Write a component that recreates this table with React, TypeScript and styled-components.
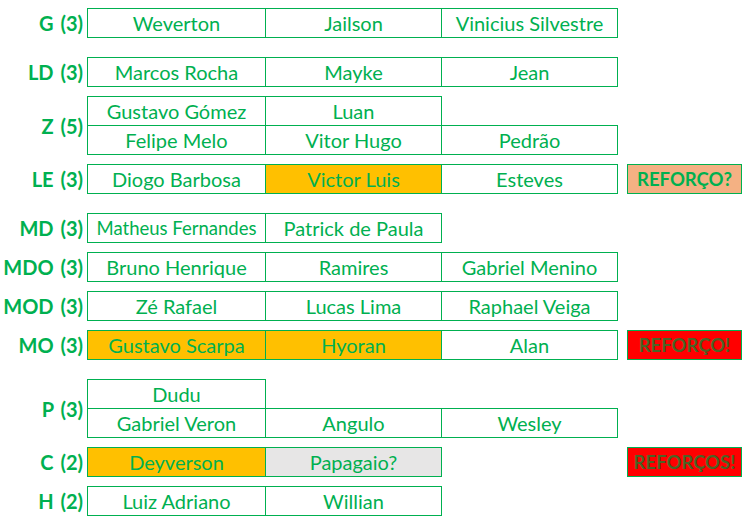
import styled, { createGlobalStyle } from "styled-components";

const GREEN = "#00b050";

const GlobalStyle = createGlobalStyle`
  html, body {
    margin: 0;
    padding: 0;
    background: #ffffff;
  }
  body {
    font-family: Lato, "Open Sans", sans-serif;
    color: ${GREEN};
  }
`;

const Sheet = styled.div`
  display: flex;
  flex-direction: column;
  padding-top: 8px;
  width: 756px;
`;

const Group = styled.div<{ $space: number }>`
  display: flex;
  align-items: center;
  margin-top: ${(p) => p.$space}px;
`;

const Label = styled.div`
  width: 87px;
  box-sizing: border-box;
  padding-right: 4px;
  text-align: right;
  font-weight: 700;
  font-size: 20px;
  word-spacing: 2px;
  white-space: nowrap;
`;

const Rows = styled.div`
  display: flex;
  flex-direction: column;
`;

const Row = styled.div`
  display: flex;
  & + & {
    margin-top: -1px;
  }
`;

const Cell = styled.div<{ $fill?: string; $first?: boolean; $small?: boolean }>`
  box-sizing: border-box;
  width: ${(p) => (p.$first ? 179 : 177)}px;
  height: 30px;
  margin-left: ${(p) => (p.$first ? 0 : -1)}px;
  border: 1px solid ${GREEN};
  background: ${(p) => p.$fill || "#ffffff"};
  display: flex;
  align-items: center;
  justify-content: center;
  font-size: ${(p) => (p.$small ? 18.5 : 20)}px;
  white-space: nowrap;
`;

const Note = styled.div<{ $fill: string; $ink: string; $skip: number }>`
  box-sizing: border-box;
  width: 115px;
  height: 30px;
  margin-left: ${(p) => 9 + p.$skip * 176}px;
  border: 1px solid ${GREEN};
  background: ${(p) => p.$fill};
  color: ${(p) => p.$ink};
  display: flex;
  align-items: center;
  justify-content: center;
  font-weight: 700;
  font-size: 18.5px;
  white-space: nowrap;
`;

type Player = { name: string; fill?: string; small?: boolean };
type Position = {
  label: string;
  space: number;
  rows: Player[][];
  note?: { text: string; fill: string; ink: string };
};

const ORANGE = "#ffc000";
const GREY = "#e7e6e6";
const RED_INK = "#4a6426";

const squad: Position[] = [
  { label: "G (3)", space: 0, rows: [[{ name: "Weverton" }, { name: "Jailson" }, { name: "Vinicius Silvestre" }]] },
  { label: "LD (3)", space: 19, rows: [[{ name: "Marcos Rocha" }, { name: "Mayke" }, { name: "Jean" }]] },
  {
    label: "Z (5)",
    space: 9,
    rows: [
      [{ name: "Gustavo Gómez" }, { name: "Luan" }],
      [{ name: "Felipe Melo" }, { name: "Vitor Hugo" }, { name: "Pedrão" }],
    ],
  },
  {
    label: "LE (3)",
    space: 9,
    rows: [[{ name: "Diogo Barbosa" }, { name: "Victor Luis", fill: ORANGE }, { name: "Esteves" }]],
    note: { text: "REFORÇO?", fill: "#f4b183", ink: GREEN },
  },
  { label: "MD (3)", space: 19, rows: [[{ name: "Matheus Fernandes", small: true }, { name: "Patrick de Paula" }]] },
  { label: "MDO (3)", space: 9, rows: [[{ name: "Bruno Henrique" }, { name: "Ramires" }, { name: "Gabriel Menino" }]] },
  { label: "MOD (3)", space: 9, rows: [[{ name: "Zé Rafael" }, { name: "Lucas Lima" }, { name: "Raphael Veiga" }]] },
  {
    label: "MO (3)",
    space: 9,
    rows: [[{ name: "Gustavo Scarpa", fill: ORANGE }, { name: "Hyoran", fill: ORANGE }, { name: "Alan" }]],
    note: { text: "REFORÇO!", fill: "#ff0000", ink: RED_INK },
  },
  {
    label: "P (3)",
    space: 19,
    rows: [
      [{ name: "Dudu" }],
      [{ name: "Gabriel Veron" }, { name: "Angulo" }, { name: "Wesley" }],
    ],
  },
  {
    label: "C (2)",
    space: 9,
    rows: [[{ name: "Deyverson", fill: ORANGE }, { name: "Papagaio?", fill: GREY }]],
    note: { text: "REFORÇOS!", fill: "#ff0000", ink: RED_INK },
  },
  { label: "H (2)", space: 9, rows: [[{ name: "Luiz Adriano" }, { name: "Willian" }]] },
];

export default function App() {
  return (
    <>
      <GlobalStyle />
      <Sheet>
        {squad.map((pos) => (
          <Group key={pos.label} $space={pos.space}>
            <Label>{pos.label}</Label>
            <Rows>
              {pos.rows.map((row, i) => (
                <Row key={i}>
                  {row.map((p, j) => (
                    <Cell key={p.name} $first={j === 0} $fill={p.fill} $small={p.small}>
                      {p.name}
                    </Cell>
                  ))}
                </Row>
              ))}
            </Rows>
            {pos.note && (
              <Note $fill={pos.note.fill} $ink={pos.note.ink} $skip={3 - pos.rows[0].length}>
                {pos.note.text}
              </Note>
            )}
          </Group>
        ))}
      </Sheet>
    </>
  );
}
